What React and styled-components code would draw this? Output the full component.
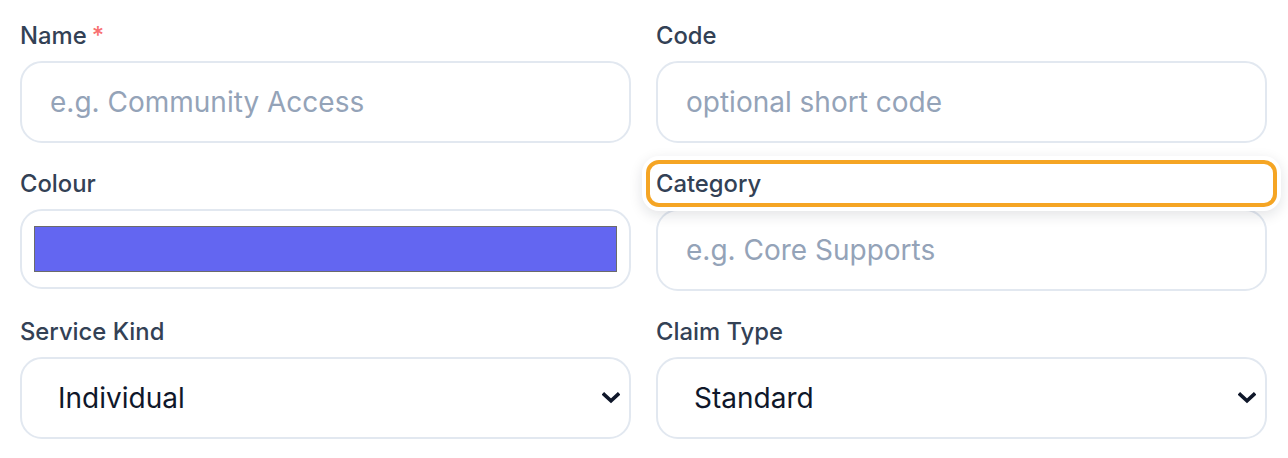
import React, { useState } from 'react';
import styled, { createGlobalStyle } from 'styled-components';

const Global = createGlobalStyle`
  html, body {
    margin: 0;
    background: #ffffff;
  }
  body {
    font-family: Inter, "Noto Sans", "Liberation Sans", sans-serif;
  }
  * { box-sizing: border-box; }
`;

const chevron = encodeURIComponent(
  '<svg xmlns="http://www.w3.org/2000/svg" width="18" height="12" viewBox="0 0 18 12"><path d="M2.2 2.5 L9 8.8 L15.8 2.5" fill="none" stroke="#0f172a" stroke-width="3.6" stroke-linecap="square"/></svg>'
);

const Form = styled.form`
  display: grid;
  grid-template-columns: 611px 611px;
  column-gap: 25px;
  row-gap: 26px;
  padding: 21px 21px 0 20px;
`;

const Field = styled.div`
  display: flex;
  flex-direction: column;
  gap: 10px;
`;

const Label = styled.label`
  position: relative;
  display: block;
  height: 30px;
  line-height: 30px;
  font-size: 23.8px;
  font-weight: 500;
  color: #334155;
  background: #fff;

  ${(p) =>
    p.$highlight &&
    `
    &::after {
      content: '';
      position: absolute;
      top: -9px;
      bottom: -8px;
      left: -10px;
      right: -10px;
      border: 4.5px solid #f5a524;
      border-radius: 13px;
      box-shadow: 0 0 0 4px #ffffff, 0 4px 14px 4px rgba(15, 23, 42, 0.12);
      pointer-events: none;
    }
  `}
`;

const Required = styled.span`
  color: #f87171;
  margin-left: 5px;
`;

const box = `
  width: 100%;
  height: 82px;
  border: 2px solid #e2e8f0;
  border-radius: 22px;
  background-color: #fff;
  outline: none;
`;

const TextInput = styled.input`
  ${box}
  padding: 0 28px;
  font-family: Inter, "Noto Sans", sans-serif;
  font-size: 28px;
  color: #0f172a;

  &::placeholder {
    color: #94a3b8;
  }
`;

const ColourInput = styled.input`
  ${box}
  height: 80px;
  padding: 15px 12px;
  cursor: pointer;

  &::-webkit-color-swatch-wrapper {
    padding: 0;
  }
  &::-webkit-color-swatch {
    border: 1px solid #6b6b6b;
    border-radius: 0;
  }
`;

const Select = styled.select`
  ${box}
  appearance: none;
  padding: 0 40px 0 36px;
  font-family: Inter, "Noto Sans", sans-serif;
  font-size: 28px;
  color: #0f172a;
  background-image: url("data:image/svg+xml,${chevron}");
  background-repeat: no-repeat;
  background-position: right 9px center;
  background-size: 18px 12px;
`;

export default function App() {
  const [colour, setColour] = useState('#6366f1');

  return (
    <>
      <Global />
      <Form>
        <Field>
          <Label>
            Name<Required>*</Required>
          </Label>
          <TextInput placeholder="e.g. Community Access" />
        </Field>
        <Field>
          <Label>Code</Label>
          <TextInput placeholder="optional short code" />
        </Field>
        <Field>
          <Label>Colour</Label>
          <ColourInput
            type="color"
            value={colour}
            onChange={(e) => setColour(e.target.value)}
          />
        </Field>
        <Field>
          <Label $highlight>Category</Label>
          <TextInput placeholder="e.g. Core Supports" />
        </Field>
        <Field>
          <Label>Service Kind</Label>
          <Select defaultValue="individual">
            <option value="individual">Individual</option>
            <option value="group">Group</option>
          </Select>
        </Field>
        <Field>
          <Label>Claim Type</Label>
          <Select defaultValue="standard">
            <option value="standard">Standard</option>
            <option value="cancellation">Cancellation</option>
          </Select>
        </Field>
      </Form>
    </>
  );
}
